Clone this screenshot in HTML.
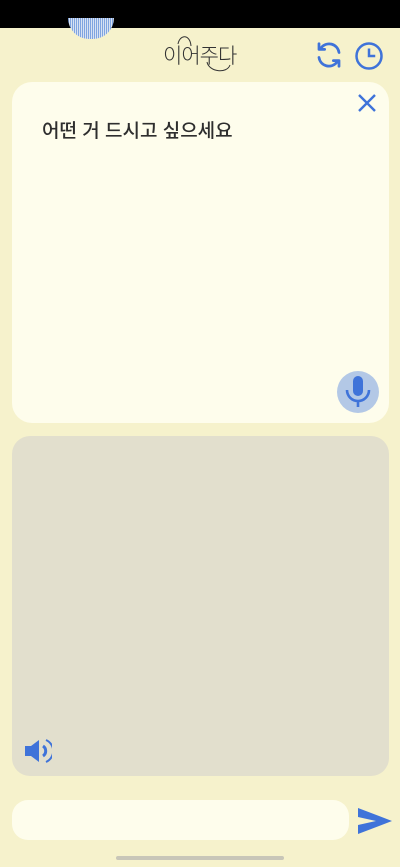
<!DOCTYPE html>
<html><head><meta charset="utf-8"><style>
body{margin:0;width:400px;height:867px;background:#f6f2cc;position:relative;overflow:hidden;font-family:"Liberation Sans","Noto Sans CJK KR",sans-serif}
.top{position:absolute;left:0;top:0;width:400px;height:28px;background:#000}
.blob{position:absolute;left:68px;top:18px;width:46px;height:21px;border-radius:0 0 24px 24px;background:repeating-linear-gradient(90deg,#7fa4e0 0 1px,#d8e2f2 1px 2px)}
.logo{position:absolute;left:163px;top:40px;font-size:21px;font-weight:300;color:#333;letter-spacing:-1px}
.card{position:absolute;left:12px;top:82px;width:377px;height:341px;background:#fefdec;border-radius:20px}
.panel{position:absolute;left:12px;top:436px;width:377px;height:340px;background:#e2dfcd;border-radius:18px}
.txt{position:absolute;left:42px;top:116px;font-size:19px;font-weight:500;color:#2e2e2e}
.inp{position:absolute;left:12px;top:800px;width:337px;height:40px;background:#fefdec;border-radius:16px}
.home{position:absolute;left:116px;top:856px;width:168px;height:4px;background:#c8c6b8;border-radius:2px}
svg{position:absolute}
</style></head><body>
<div class="top"></div>
<div class="blob"></div>
<div class="logo">이어주다</div>
<svg style="left:172px;top:34px" width="60" height="40" viewBox="0 0 60 40"><path d="M6 10 C8 0 18 0 19 12" fill="none" stroke="#333" stroke-width="1"/><path d="M35 28 C37 38 55 40 58 31" fill="none" stroke="#333" stroke-width="1"/></svg>
<svg style="left:314px;top:40px" width="30" height="30" viewBox="0 0 24 24" fill="none" stroke="#3f73d9" stroke-width="2.2" stroke-linecap="round" stroke-linejoin="round"><path d="M20 10a8 8 0 0 0-14.5-3.5M4 14a8 8 0 0 0 14.5 3.5"/><path d="M4 3v4.5h4.5M20 21v-4.5h-4.5"/></svg>
<svg style="left:354px;top:41px" width="30" height="30" viewBox="0 0 24 24" fill="none" stroke="#3f73d9" stroke-width="2"><circle cx="12" cy="12" r="10"/><path d="M12 6v6h5"/></svg>
<div class="card"></div>
<svg style="left:357px;top:93px" width="20" height="20" viewBox="0 0 20 20" stroke="#3f73d9" stroke-width="2.4"><path d="M2 2L18 18M18 2L2 18"/></svg>
<div class="txt">어떤 거 드시고 싶으세요</div>
<svg style="left:337px;top:371px" width="42" height="42" viewBox="0 0 42 42"><circle cx="21" cy="21" r="21" fill="#b3c8e6"/><rect x="16" y="5" width="10" height="20" rx="5" fill="#3f73d9"/><path d="M10 19a11 11 0 0 0 22 0M21 30v6" fill="none" stroke="#3f73d9" stroke-width="2.6"/></svg>
<div class="panel"></div>
<svg style="left:24px;top:738px" width="28" height="26" viewBox="0 0 28 26"><path d="M1 8h6l8-6v22l-8-6H1z" fill="#3f73d9"/><path d="M19 8a6 6 0 0 1 0 10" fill="none" stroke="#3f73d9" stroke-width="3"/><path d="M22 2a12 12 0 0 1 0 22" fill="none" stroke="#3f73d9" stroke-width="2"/></svg>
<div class="inp"></div>
<svg style="left:358px;top:808px" width="34" height="26" viewBox="0 0 34 26"><path d="M0 0L34 13L0 26V17L18 13L0 9Z" fill="#3f73d9"/></svg>
<div class="home"></div>
</body></html>
